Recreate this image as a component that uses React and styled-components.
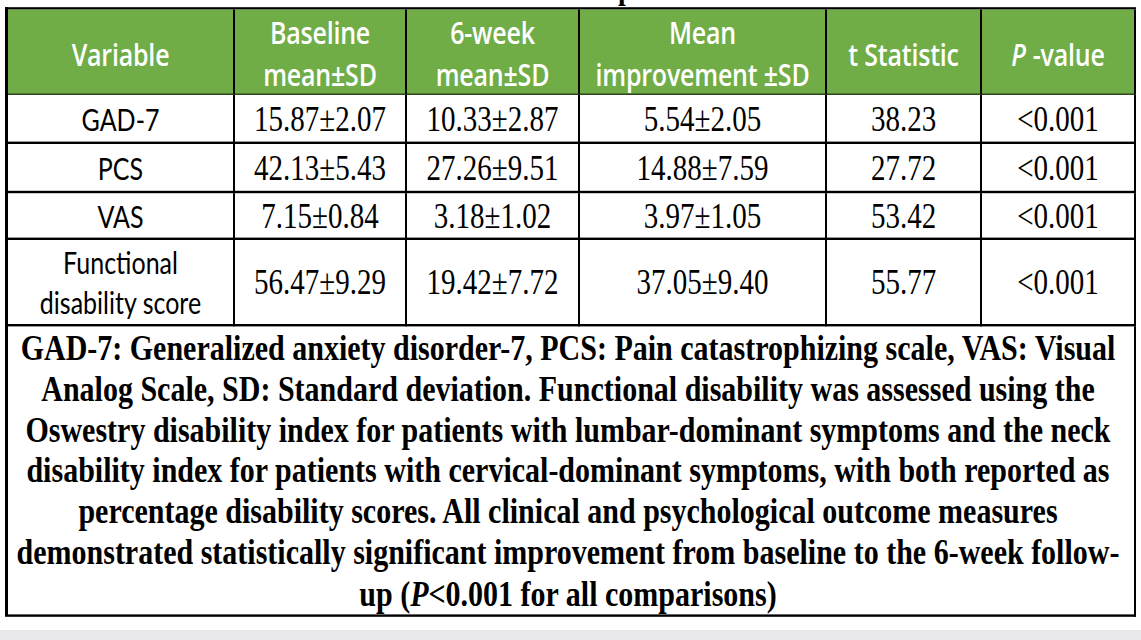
import React from 'react'
import styled, { createGlobalStyle } from 'styled-components'

// the source picture is stretched vertically, so the sheet is laid out
// at natural height and scaled on Y once
const STRETCH = 1.2

const GlobalStyle = createGlobalStyle`
  html, body {
    margin: 0;
    padding: 0;
    background: #e8e8ea;
  }
`

const Paper = styled.div`
  width: 1141px;
  height: 630px;
  background: #ffffff;
  overflow: hidden;
`

const Sheet = styled.div`
  width: 1141px;
  transform: scaleY(${STRETCH});
  transform-origin: top left;
`

const TitleClip = styled.div`
  height: ${7 / STRETCH}px;
  overflow: hidden;
  padding-left: 618px;
  font-family: "Liberation Serif", serif;
  font-weight: 700;
  font-size: 28px;
  line-height: 28px;
  span {
    display: block;
    margin-top: -24px;
  }
`

const Grid = styled.div`
  margin-left: 5px;
  width: 1131px;
  display: grid;
  grid-template-columns: 227px 172px 173px 247px 155px 154px;
  border-left: 3px solid #000;
  border-top: 2.5px solid #000;
  box-sizing: border-box;
`

const HeadCell = styled.div`
  box-sizing: border-box;
  height: ${86 / STRETCH}px;
  background: #70ad47;
  color: #ffffff;
  border-right: 2px solid #000;
  border-bottom: 1.5px solid #1b2a12;
  display: flex;
  align-items: center;
  justify-content: center;
  text-align: center;
  font-family: "Open Sans", "Liberation Sans", sans-serif;
  font-weight: 600;
  font-size: 25px;
  letter-spacing: -0.2px;
  line-height: ${41 / STRETCH}px;
  padding-top: 3px;
  i {
    font-style: italic;
    margin-right: 7px;
  }
`

const Cell = styled.div`
  box-sizing: border-box;
  height: ${p => p.$h / STRETCH}px;
  border-right: 2px solid #000;
  border-bottom: 2.5px solid #000;
  display: flex;
  align-items: center;
  justify-content: center;
  text-align: center;
  color: #000;
  font-family: ${p => (p.$serif ? '"Liberation Serif", serif' : 'Lato, "Liberation Sans", sans-serif')};
  font-size: ${p => (p.$serif ? '29px' : '25px')};
  line-height: ${41 / STRETCH}px;
`

const Caption = styled.div`
  grid-column: 1 / -1;
  box-sizing: border-box;
  height: ${291 / STRETCH}px;
  border-right: 2px solid #000;
  border-bottom: 2.5px solid #000;
  display: flex;
  align-items: center;
  justify-content: center;
  text-align: center;
  padding-right: 6px;
  font-family: "Liberation Serif", serif;
  font-weight: 700;
  font-size: 30px;
  line-height: ${41 / STRETCH}px;
  color: #000;
  white-space: nowrap;
`

const heads = [
  <>Variable</>,
  <>Baseline<br />mean±SD</>,
  <>6-week<br />mean±SD</>,
  <>Mean<br />improvement ±SD</>,
  <>t Statistic</>,
  <><i>P</i>-value</>,
]

const rows = [
  { h: 49, label: <>GAD-7</>, vals: ['15.87±2.07', '10.33±2.87', '5.54±2.05', '38.23', '<0.001'] },
  { h: 49, label: <>PCS</>, vals: ['42.13±5.43', '27.26±9.51', '14.88±7.59', '27.72', '<0.001'] },
  { h: 47, label: <>VAS</>, vals: ['7.15±0.84', '3.18±1.02', '3.97±1.05', '53.42', '<0.001'] },
  { h: 86, label: <>Functional<br />disability score</>, vals: ['56.47±9.29', '19.42±7.72', '37.05±9.40', '55.77', '<0.001'] },
]

export default function App() {
  return (
    <>
      <GlobalStyle />
      <Paper>
        <Sheet>
          <TitleClip><span>p</span></TitleClip>
          <Grid>
            {heads.map((h, i) => <HeadCell key={i}>{h}</HeadCell>)}
            {rows.map((r, i) => (
              <React.Fragment key={i}>
                <Cell $h={r.h}>{r.label}</Cell>
                {r.vals.map((v, j) => <Cell key={j} $h={r.h} $serif>{v}</Cell>)}
              </React.Fragment>
            ))}
            <Caption>
              <div>
                GAD-7: Generalized anxiety disorder-7, PCS: Pain catastrophizing scale, VAS: Visual<br />
                Analog Scale, SD: Standard deviation. Functional disability was assessed using the<br />
                Oswestry disability index for patients with lumbar-dominant symptoms and the neck<br />
                disability index for patients with cervical-dominant symptoms, with both reported as<br />
                percentage disability scores. All clinical and psychological outcome measures<br />
                demonstrated statistically significant improvement from baseline to the 6-week follow-<br />
                up (<i>P</i>&lt;0.001 for all comparisons)
              </div>
            </Caption>
          </Grid>
        </Sheet>
      </Paper>
    </>
  )
}
